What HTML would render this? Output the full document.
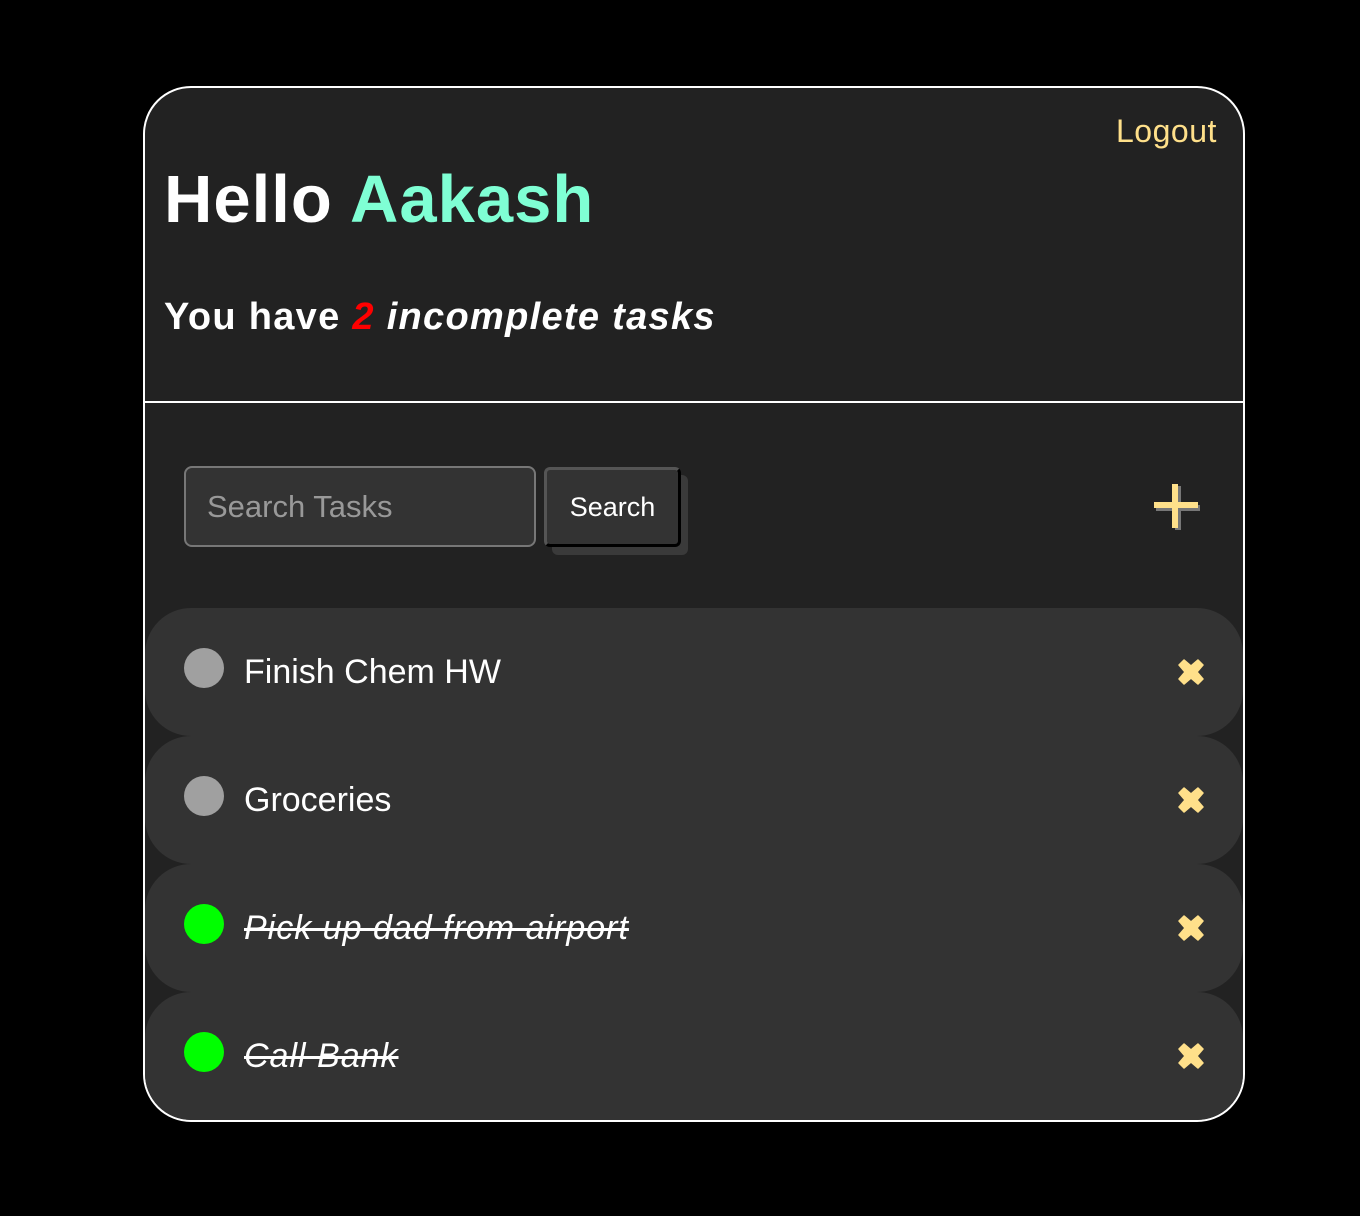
<!DOCTYPE html>
<html><head><meta charset="utf-8"><style>
*{margin:0;padding:0;box-sizing:border-box}
body{width:1360px;height:1216px;background:#000;position:relative;font-family:"Liberation Sans",Arial,sans-serif;overflow:hidden}
.card{position:absolute;left:143px;top:86px;width:1102px;height:1036px;border:2px solid #fff;border-radius:48px;background:#222;overflow:hidden}
.abs{position:absolute;white-space:nowrap}
.row{position:absolute;left:0;width:1098px;height:128px;background:#333;border-radius:46px}
.dot{position:absolute;left:39px;top:40px;width:40px;height:40px;border-radius:50%}
.txt{position:absolute;left:99px;top:44px;font-size:34px;color:#fff;line-height:40px}
.x{position:absolute;left:1033px;top:51px;width:26px;height:26px}
.done{font-style:italic;text-decoration:line-through;text-decoration-thickness:3px;letter-spacing:1px}
</style></head><body>
<div class="card">
  <div class="abs" style="left:971px;top:23px;font-size:32px;color:#ffe08a;line-height:40px;letter-spacing:0.5px">Logout</div>
  <div class="abs" style="left:19px;top:72px;font-size:67px;font-weight:bold;color:#fff;line-height:80px;letter-spacing:1px">Hello <span style="color:#7fffd4">Aakash</span></div>
  <div class="abs" style="left:19px;top:207px;font-size:38px;font-weight:bold;color:#fff;line-height:44px;letter-spacing:1.3px">You have <i style="color:#f00">2</i> <i>incomplete tasks</i></div>
  <div class="abs" style="left:0;top:313px;width:1102px;height:2px;background:#fff"></div>
  <div class="abs" style="left:39px;top:378px;width:352px;height:81px;border:2px solid #777;border-radius:8px;background:#333;font-size:31px;color:#999;line-height:77px;padding-left:21px">Search Tasks</div>
  <div class="abs" style="left:407px;top:387px;width:136px;height:80px;background:#3a3a3a;border-radius:6px"></div>
  <div class="abs" style="left:399px;top:379px;width:137px;height:80px;background:#333;border:3px solid #555;border-right-color:#000;border-bottom-color:#000;border-radius:6px;font-size:27px;color:#fff;line-height:74px;text-align:center">Search</div>
  <svg class="abs" style="left:1008px;top:395px" width="50" height="50"><g fill="#777"><rect x="22" y="3" width="6" height="44"/><rect x="3" y="22" width="44" height="6"/></g><g fill="#ffe08a"><rect x="19" y="1" width="6" height="44"/><rect x="1" y="19" width="44" height="6"/></g></svg>
  <div class="row" style="top:520px"><div class="dot" style="background:#a0a0a0"></div><div class="txt">Finish Chem HW</div><svg class="x" viewBox="0 0 26 26"><path d="M6 1 L13 7 L20 1 L25 6 L19 13 L25 20 L20 25 L13 19 L6 25 L1 20 L7 13 L1 6Z" fill="#ffe08a" stroke="#ffe08a" stroke-width="1.5" stroke-linejoin="round"/></svg></div>
  <div class="row" style="top:648px"><div class="dot" style="background:#a0a0a0"></div><div class="txt">Groceries</div><svg class="x" viewBox="0 0 26 26"><path d="M6 1 L13 7 L20 1 L25 6 L19 13 L25 20 L20 25 L13 19 L6 25 L1 20 L7 13 L1 6Z" fill="#ffe08a" stroke="#ffe08a" stroke-width="1.5" stroke-linejoin="round"/></svg></div>
  <div class="row" style="top:776px"><div class="dot" style="background:#0f0"></div><div class="txt done">Pick up dad from airport</div><svg class="x" viewBox="0 0 26 26"><path d="M6 1 L13 7 L20 1 L25 6 L19 13 L25 20 L20 25 L13 19 L6 25 L1 20 L7 13 L1 6Z" fill="#ffe08a" stroke="#ffe08a" stroke-width="1.5" stroke-linejoin="round"/></svg></div>
  <div class="row" style="top:904px"><div class="dot" style="background:#0f0"></div><div class="txt done">Call Bank</div><svg class="x" viewBox="0 0 26 26"><path d="M6 1 L13 7 L20 1 L25 6 L19 13 L25 20 L20 25 L13 19 L6 25 L1 20 L7 13 L1 6Z" fill="#ffe08a" stroke="#ffe08a" stroke-width="1.5" stroke-linejoin="round"/></svg></div>
</div>
</body></html>
